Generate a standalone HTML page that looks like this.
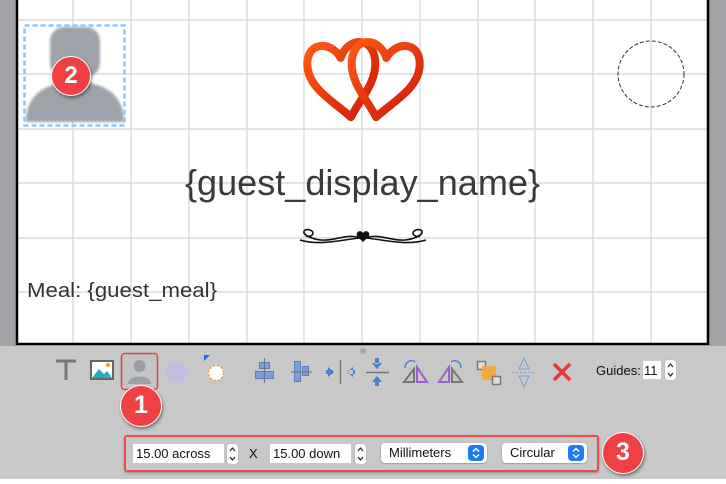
<!DOCTYPE html>
<html><head><meta charset="utf-8"><style>
*{margin:0;padding:0;box-sizing:border-box}
body{width:726px;height:484px;overflow:hidden;background:#c8c8c8;font-family:"Liberation Sans",sans-serif;position:relative}
.abs{position:absolute}
.badge{position:absolute;border-radius:50%;background:#ef4044;color:#fff;font-weight:bold;text-align:center;box-shadow:1px 2px 3px rgba(0,0,0,.45);border:1.5px solid #fff}
.field{position:absolute;background:#fff;height:19px;font-size:13px;line-height:19px;padding-left:3px;color:#111}
.step{position:absolute;width:11px;height:20px;background:#fff;border-radius:3px;box-shadow:0 0 1px #888}
.step svg,.pop i svg{display:block}
.pop{position:absolute;background:#fff;height:20px;border-radius:4px;font-size:13px;line-height:20px;padding-left:8px;color:#111;box-shadow:0 0.5px 1.5px rgba(0,0,0,.35)}
.pop i{position:absolute;right:3px;top:2px;width:16px;height:16px;background:#1a7cf5;border-radius:4px}
</style></head><body>
<div class="abs" style="left:0;top:0;width:16px;height:346px;background:#a2a2a6"></div>
<div class="abs" style="left:709px;top:0;width:17px;height:346px;background:#a2a2a6"></div>
<svg class="abs" style="left:0;top:0" width="726" height="350">
<rect x="17" y="0" width="692" height="345" fill="#fff"/>
<g stroke="#d4d4d4" stroke-width="1.2">
<line x1="73" y1="0" x2="73" y2="344"/><line x1="131" y1="0" x2="131" y2="344"/><line x1="189" y1="0" x2="189" y2="344"/><line x1="247" y1="0" x2="247" y2="344"/><line x1="304" y1="0" x2="304" y2="344"/><line x1="362" y1="0" x2="362" y2="344"/><line x1="420" y1="0" x2="420" y2="344"/><line x1="478" y1="0" x2="478" y2="344"/><line x1="535" y1="0" x2="535" y2="344"/><line x1="593" y1="0" x2="593" y2="344"/><line x1="651" y1="0" x2="651" y2="344"/>
<line x1="17" y1="20" x2="708" y2="20"/><line x1="17" y1="74" x2="708" y2="74"/><line x1="17" y1="129" x2="708" y2="129"/><line x1="17" y1="183" x2="708" y2="183"/><line x1="17" y1="238" x2="708" y2="238"/><line x1="17" y1="292" x2="708" y2="292"/>
</g>
<line x1="17" y1="0" x2="17" y2="345" stroke="#000" stroke-width="2.5"/>
<line x1="708" y1="0" x2="708" y2="345" stroke="#000" stroke-width="2.5"/>
<line x1="16" y1="344" x2="709" y2="344" stroke="#000" stroke-width="2.5"/>
<defs><filter id="bl"><feGaussianBlur stdDeviation="1.2"/></filter>
<linearGradient id="hg" x1="0" y1="0" x2="1" y2="1"><stop offset="0" stop-color="#ff5a14"/><stop offset="1" stop-color="#cc1808"/></linearGradient></defs>
<g fill="#9ea3a9" filter="url(#bl)">
<rect x="50" y="27" width="50" height="50" rx="14"/>
<path d="M26 122 C26 95 45 82 75 82 C105 82 124 95 124 122 Z"/>
</g>
<rect x="24.5" y="25.5" width="100" height="100" fill="none" stroke="#8ec5ff" stroke-width="2.5" stroke-dasharray="5 3"/>
<g fill="none" stroke="url(#hg)" stroke-width="8" stroke-linejoin="round">
<path transform="translate(339,42) rotate(-6)" d="M0,16 C-8,-3 -34,-4 -34,22 C-34,44 -10,60 4,76 C14,60 34,44 34,22 C34,-4 8,-3 0,16 Z"/>
<path transform="translate(388,42) rotate(6)" d="M0,16 C-8,-3 -34,-4 -34,22 C-34,44 -14,60 -4,76 C10,60 34,44 34,22 C34,-4 8,-3 0,16 Z"/>
</g>
<circle cx="651" cy="74" r="33" fill="none" stroke="#333" stroke-width="1" stroke-dasharray="4 2"/>
<g fill="none" stroke="#111" stroke-width="1.6">
<path d="M360 238 C345 232 330 245 312 238 C300 234 303 228 310 230 C316 232 312 238 306 236"/>
<path d="M360 238 C340 240 320 246 300 240"/>
<path d="M366 238 C381 232 396 245 414 238 C426 234 423 228 416 230 C410 232 414 238 420 236"/>
<path d="M366 238 C386 240 406 246 426 240"/>
</g>
<path d="M363 242 L357 236 A3 3 0 0 1 363 233 A3 3 0 0 1 369 236 Z" fill="#111"/>
<text x="185" y="195" textLength="355" lengthAdjust="spacingAndGlyphs" font-family="Liberation Sans" font-size="36" fill="#3a3a3a">{guest_display_name}</text>
<text x="27" y="297" textLength="190" lengthAdjust="spacingAndGlyphs" font-family="Liberation Sans" font-size="20" fill="#333">Meal: {guest_meal}</text>
</svg>
<div class="abs" style="left:360px;top:348px;width:6px;height:6px;border-radius:50%;background:#a8a8a8"></div>
<svg class="abs" style="left:0;top:346px" width="726" height="60">
<path d="M56 15 H76 M66 15 V34" stroke="#777" stroke-width="3" fill="none"/>
<rect x="91" y="15" width="22" height="18" fill="#fff" stroke="#666" stroke-width="2"/>
<path d="M92 32 L99 23 L104 28 L107 25 L112 32 Z" fill="#1fb0c0"/><circle cx="108" cy="19" r="2.2" fill="#f3a030"/>
<rect x="121.5" y="7.5" width="36" height="36" rx="3" fill="#c4c4c4" stroke="#e04444" stroke-width="1.5"/>
<circle cx="139.5" cy="20" r="6" fill="#9aa0a6"/><path d="M128 38 C128 28 151 28 151 38 Z" fill="#9aa0a6"/>
<circle cx="177" cy="26" r="11" fill="#c4bde2"/>
<path d="M204 9 L210 9 L204 15 Z" fill="#1a6cf0"/>
<circle cx="216" cy="27" r="7.5" fill="#fff" stroke="#f0a040" stroke-width="1.5" stroke-dasharray="2 2"/>
<g fill="#7b9fd8" stroke="#5a7fbf" stroke-width="1">
<rect x="259.5" y="16.5" width="10" height="6"/><rect x="255.5" y="25.5" width="18" height="7"/>
<rect x="294.5" y="15.5" width="6" height="20"/><rect x="302.5" y="20.5" width="6" height="9"/>
</g>
<path d="M264.5 12 V37 M291 26 H312" stroke="#777" stroke-width="1.2"/>
<path d="M340.5 14 V38" stroke="#777" stroke-width="1.5"/>
<path d="M328 21 L334 26 L328 31 Z M326 24 H333 V28 H326Z M353 21 L347 26 L353 31 Z M348 24 H355 V28 H348Z" fill="#4a7fd0"/>
<path d="M366 26.5 H389" stroke="#777" stroke-width="1.5"/>
<path d="M372 17 L377 23 L382 17 Z M375 12 H379 V18 H375Z M372 36 L377 30 L382 36 Z M375 35 H379 V40 H375Z" fill="#4a7fd0"/>
<path d="M404 36 L414 23 L414 36 Z" fill="none" stroke="#777" stroke-width="2"/>
<path d="M417 36 L417 21 L427 36 Z" fill="none" stroke="#9a5fd0" stroke-width="2"/>
<path d="M405 22 C405 15 412 13 415 16" fill="none" stroke="#4a7fd0" stroke-width="1.5"/>
<path d="M439 36 L449 21 L449 36 Z" fill="none" stroke="#9a5fd0" stroke-width="2"/>
<path d="M452 36 L452 23 L462 36 Z" fill="none" stroke="#777" stroke-width="2"/>
<path d="M461 22 C461 15 454 13 451 16" fill="none" stroke="#4a7fd0" stroke-width="1.5"/>
<rect x="477.5" y="15.5" width="8" height="8" fill="#ddd" stroke="#777" stroke-width="1.5"/>
<rect x="482" y="20" width="14" height="14" fill="#f4a840"/>
<rect x="492.5" y="30.5" width="8" height="8" fill="#ddd" stroke="#777" stroke-width="1.5"/>
<path d="M512 26.5 H536" stroke="#8a9cc4" stroke-width="1" stroke-dasharray="2 2"/>
<path d="M524 12 L519 23 H529 Z M524 41 L519 30 H529 Z" fill="none" stroke="#7b9fd8" stroke-width="1"/>
<path d="M554 18 L570 34 M570 18 L554 34" stroke="#e03a3a" stroke-width="3.5"/>
</svg>
<div class="abs" style="left:596px;top:363px;font-size:13px;color:#111">Guides:</div>
<div class="field" style="left:643px;top:361px;width:18px;height:18px;padding-left:1px">11</div>
<div class="step" style="left:665px;top:360px"><svg width="11" height="20"><path d="M3 7 L5.5 4 L8 7 M3 13 L5.5 16 L8 13" fill="none" stroke="#333" stroke-width="1.3"/></svg></div>
<div class="abs" style="left:124px;top:435px;width:475px;height:37px;border:2px solid #ef4a4a;border-radius:3px;box-shadow:0 1px 2px rgba(0,0,0,.3)"></div>
<div class="field" style="left:133px;top:444px;width:91px">15.00 across</div>
<div class="step" style="left:227px;top:444px"><svg width="11" height="20"><path d="M3 7 L5.5 4 L8 7 M3 13 L5.5 16 L8 13" fill="none" stroke="#333" stroke-width="1.3"/></svg></div>
<div class="abs" style="left:249px;top:446px;font-size:13px;color:#111">X</div>
<div class="field" style="left:270px;top:444px;width:81px">15.00 down</div>
<div class="step" style="left:355px;top:444px"><svg width="11" height="20"><path d="M3 7 L5.5 4 L8 7 M3 13 L5.5 16 L8 13" fill="none" stroke="#333" stroke-width="1.3"/></svg></div>
<div class="pop" style="left:381px;top:443px;width:106px">Millimeters<i><svg width="16" height="16"><path d="M5 6.5 L8 3.5 L11 6.5 M5 9.5 L8 12.5 L11 9.5" fill="none" stroke="#fff" stroke-width="1.5"/></svg></i></div>
<div class="pop" style="left:502px;top:443px;width:85px">Circular<i><svg width="16" height="16"><path d="M5 6.5 L8 3.5 L11 6.5 M5 9.5 L8 12.5 L11 9.5" fill="none" stroke="#fff" stroke-width="1.5"/></svg></i></div>
<div class="abs" style="left:0;top:479px;width:726px;height:5px;background:#fff"></div>
<div class="badge" style="left:51px;top:56px;width:40px;height:40px;font-size:24px;line-height:37px">2</div>
<div class="badge" style="left:120px;top:385px;width:42px;height:42px;font-size:25px;line-height:39px">1</div>
<div class="badge" style="left:602px;top:432px;width:42px;height:42px;font-size:25px;line-height:39px">3</div>
</body></html>
